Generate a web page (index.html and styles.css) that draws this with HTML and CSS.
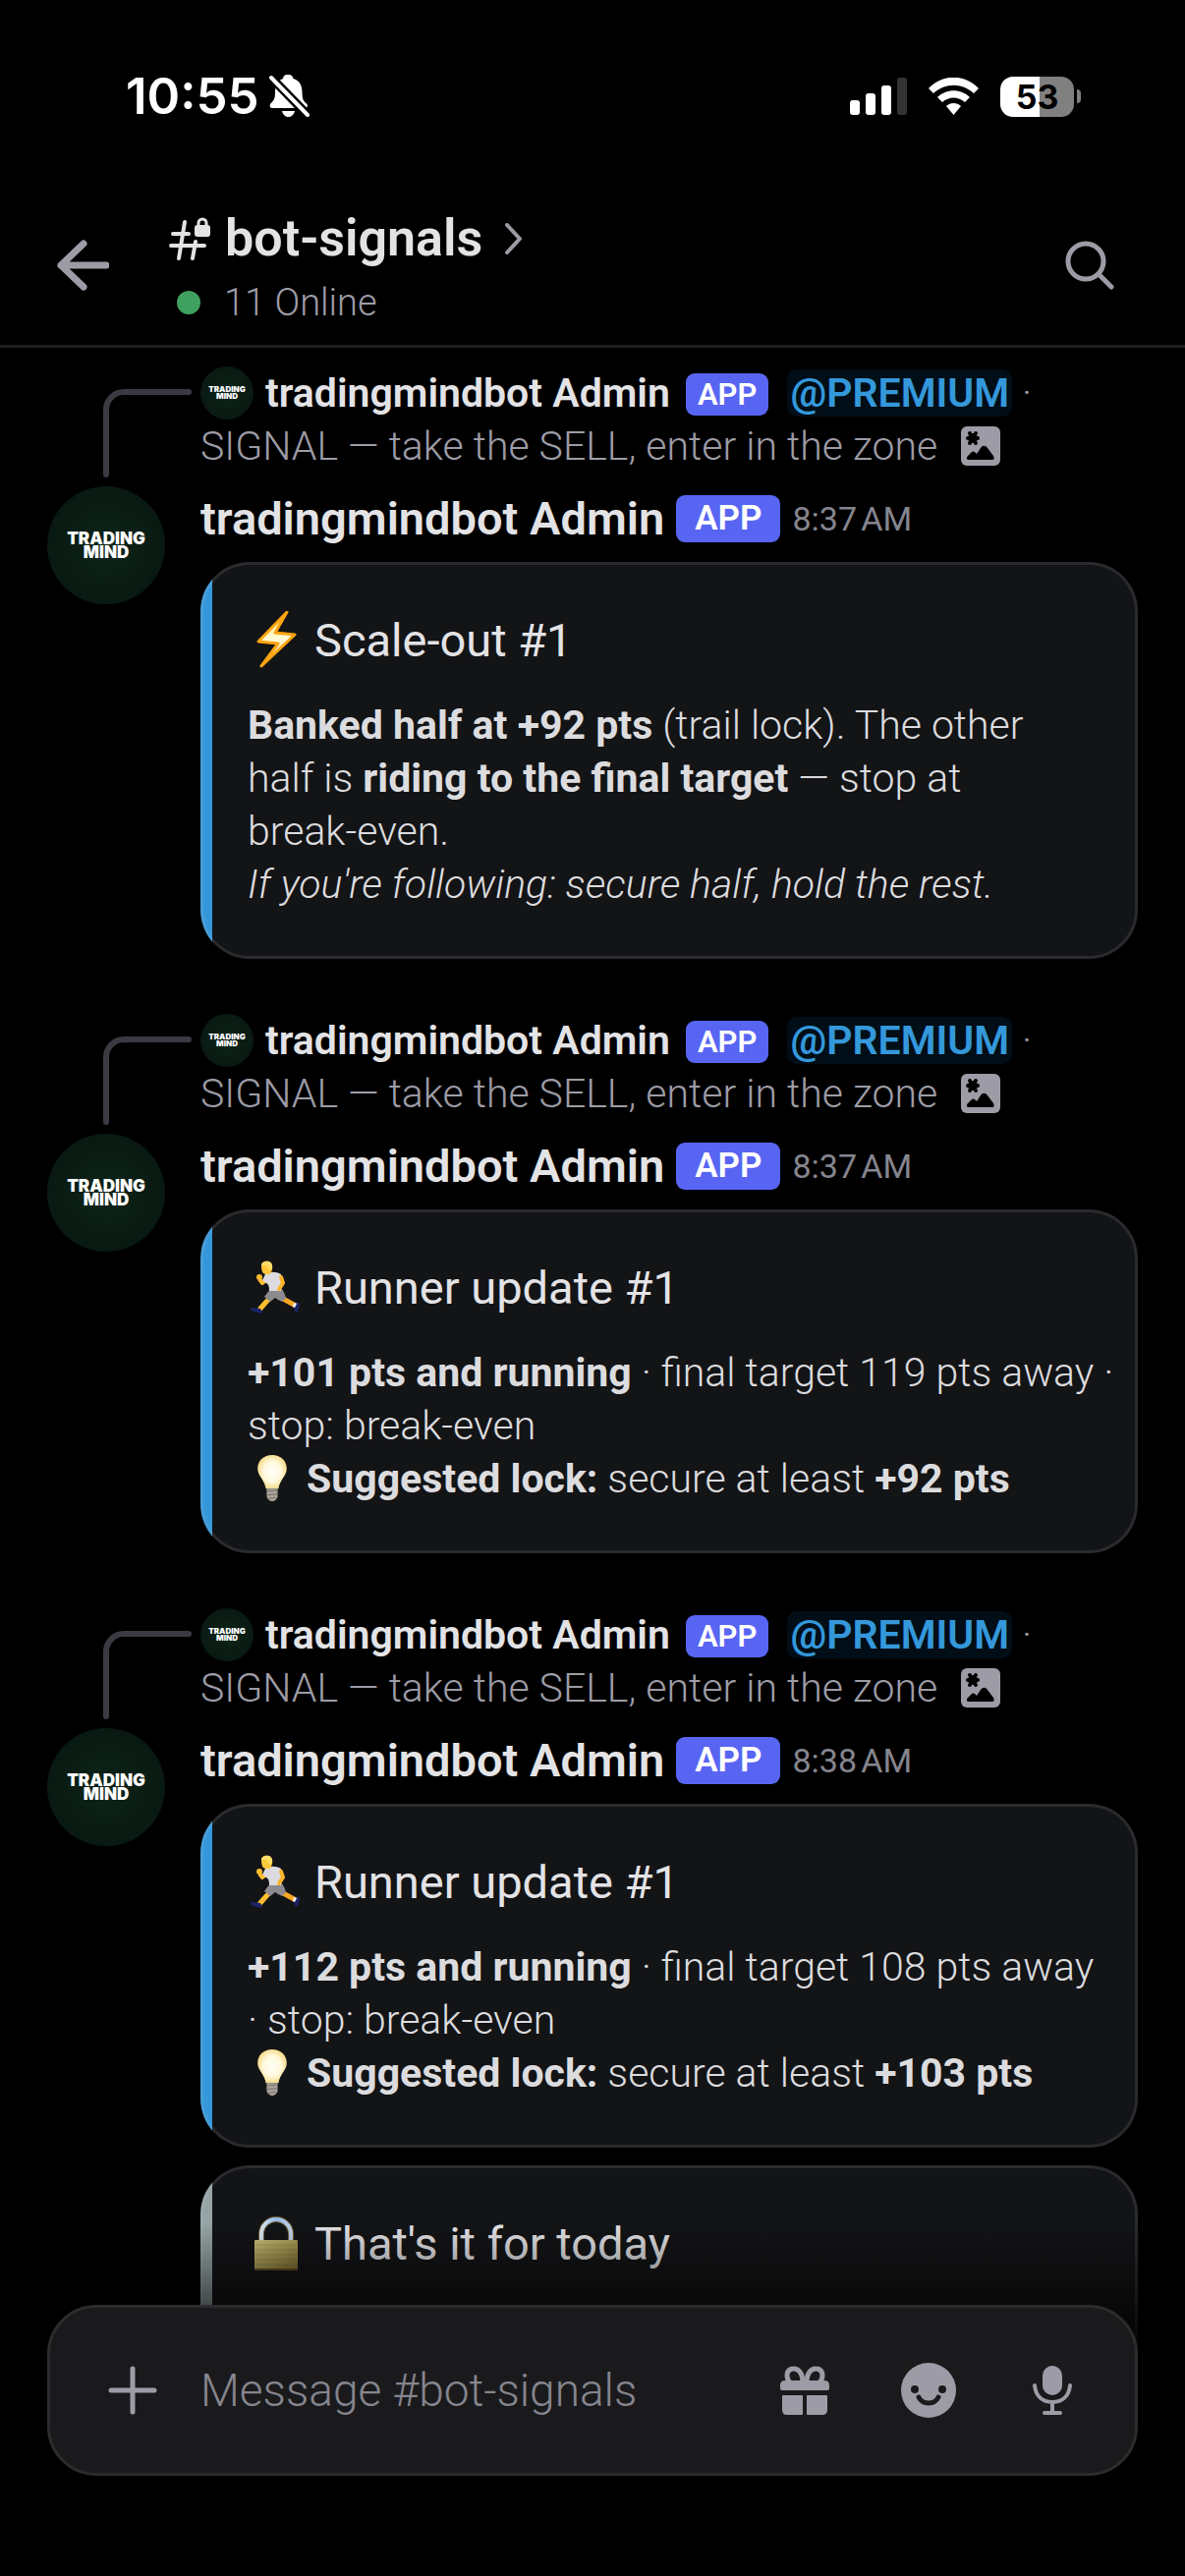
FILE: index.html
```html
<!DOCTYPE html>
<html lang="en">
<head>
    <meta charset="UTF-8">
    <meta name="viewport" content="width=device-width, initial-scale=1.0">
    <title>#bot-signals</title>
    <link rel="stylesheet" href="styles.css">
</head>
<body>
    <!-- Shared icons -->
    <svg class="sprite" aria-hidden="true">
        <defs>
            <linearGradient id="bolt-fill" x1="0" y1="0" x2="0" y2="1">
                <stop offset="0" stop-color="#ffe36b"/>
                <stop offset="0.5" stop-color="#fffbd8"/>
                <stop offset="1" stop-color="#ffd84a"/>
            </linearGradient>
            <radialGradient id="bulb-fill">
                <stop offset="0" stop-color="#fffffa"/>
                <stop offset="0.6" stop-color="#fff9dd"/>
                <stop offset="1" stop-color="#f5dd90"/>
            </radialGradient>
            <linearGradient id="lock-fill" x1="0" y1="0" x2="1" y2="1">
                <stop offset="0" stop-color="#d2c77d"/>
                <stop offset="0.5" stop-color="#aa9d56"/>
                <stop offset="1" stop-color="#7d6b32"/>
            </linearGradient>
            <linearGradient id="shackle-fill" x1="0" y1="0" x2="1" y2="0">
                <stop offset="0" stop-color="#dfe9f5"/>
                <stop offset="0.5" stop-color="#8fb8ea"/>
                <stop offset="1" stop-color="#c3d3e8"/>
            </linearGradient>
        </defs>
        <symbol id="reply-line" viewBox="0 0 93 90">
            <path d="M3 87V21A18 18 0 0 1 21 3H87" fill="none" stroke="#3a3a42" stroke-width="6" stroke-linecap="round"/>
        </symbol>
        <symbol id="image" viewBox="0 0 40 40">
            <rect width="40" height="40" rx="6" fill="#9d9ca6"/>
            <g fill="#000">
                <circle cx="12" cy="12" r="5"/>
                <circle cx="7" cy="12" r="2"/><circle cx="17" cy="12" r="2"/>
                <circle cx="9" cy="7" r="2"/><circle cx="15" cy="7" r="2"/>
                <circle cx="9" cy="17" r="2"/><circle cx="15" cy="17" r="2"/>
                <path d="M8 34c-2 0-3-2-1-4l3-3c2-2 3-2 5 0l1 1 4-6c2-3 5-3 7 0l6 8c1 2 1 4-1 4z"/>
            </g>
        </symbol>
        <symbol id="runner" viewBox="0 0 56 60">
            <path d="M31 39l7 3 11 6" fill="none" stroke="#f5a623" stroke-width="5" stroke-linejoin="round"/>
            <path d="M25 38l-6 6-7 8" fill="none" stroke="#ffbe2e" stroke-width="5" stroke-linejoin="round"/>
            <path d="M51 44l2 2-2 8c-1 1-3 1-3-1l-1-4z" fill="#1b2566"/>
            <path d="M4 50l9 1 2 3c-1 2-3 2-5 1l-6-2c-1-1-1-2 0-3z" fill="#1b2566"/>
            <path d="M47 45l3 1-2 4-2-1z" fill="#f2f2f2"/>
            <path d="M23 31l11-1c3 3 4 7 5 10l-4 4-7-4-5 4-6-5z" fill="#8b8b90"/>
            <path d="M19 22l-4 3-3-4" fill="none" stroke="#ffbe2e" stroke-width="4" stroke-linejoin="round"/>
            <circle cx="12" cy="19" r="3" fill="#ffbe2e"/>
            <path d="M18 16c4-3 11-3 16 0l1 7-1 10H22c0-5-1-7-3-8l-4-3z" fill="#dcdce0"/>
            <path d="M34 19l2 6-4 6" fill="none" stroke="#fdb32a" stroke-width="4" stroke-linejoin="round" stroke-linecap="round"/>
            <path d="M14 7c0-5 10-6 11 0 1 4-1 6-2 9h-4c-3 0-5-2-5-9z" fill="#ffc83a"/>
            <path d="M14 7c0-5 12-7 11 2l-2 3c-2-1-3-4-3-5z" fill="#f7dc6a"/>
        </symbol>
        <symbol id="bulb" viewBox="0 0 54 54">
            <path d="M27 1c9 0 16 6 16 15 0 8-8 13-9 22H20c-1-9-9-14-9-22C11 7 18 1 27 1z" fill="url(#bulb-fill)"/>
            <path d="M21 38h12v8c0 3-3 6-6 6s-6-3-6-6z" fill="#a9a49a"/>
            <path d="M21 41l12-1M21 45l12-1M23 49l8-1" stroke="#6f6b65" stroke-width="1"/>
        </symbol>
    </svg>

    <!-- Phone status bar -->
    <div class="status-bar">
        <div class="status-left">
            <span>10:55</span>
            <svg width="42" height="46" viewBox="0 0 42 46">
                <path d="M20 1c4 0 5 2 5.500 4 7 2 9 8 9 14 0 6 1 9 5 12 1 2 0 4-2 4H4c-2 0-3-2-2-4 4-4 5-6 5-12 0-7 2-12 8-14 .5-2 1-4 5-4zM14 38h13c-1 4-4 6-6.500 6s-5.500-2-6.500-6z" fill="#fff"/>
                <path d="M3 4l37 38" stroke="#000" stroke-width="9"/>
                <path d="M3 4l37 38" stroke="#fff" stroke-width="4" stroke-linecap="round"/>
            </svg>
        </div>
        <div class="status-right">
            <svg width="58" height="38" viewBox="0 0 58 38" fill="#fff">
                <rect y="23" width="10" height="15" rx="3"/>
                <rect x="16" y="16" width="10" height="22" rx="3"/>
                <rect x="32" y="8" width="10" height="30" rx="3"/>
                <rect x="48" width="10" height="38" rx="3" fill="#333"/>
            </svg>
            <svg width="51" height="38" viewBox="0 0 51 38" fill="#fff">
                <path d="M0 11C14-4 37-4 51 11l-5 5C34 5 17 5 5 16z"/>
                <path d="M9 20c9-9 24-9 33 0l-5 5c-7-6-16-6-23 0z"/>
                <path d="M18 29c4-4 11-4 15 0l-7.500 9z"/>
            </svg>
            <div class="battery"><span class="battery-level">53</span><span class="battery-tip"></span></div>
        </div>
    </div>

    <!-- Channel header -->
    <header class="channel-header">
        <button class="header-button" aria-label="Back">
            <svg width="54" height="54" viewBox="0 0 54 54"><path d="M51 27H5M28 5L5 27l23 22" fill="none" stroke="#9d9ca6" stroke-width="7" stroke-linecap="round" stroke-linejoin="round"/></svg>
        </button>
        <div class="channel-info">
            <h1 class="channel-name">
                <svg width="44" height="46" viewBox="0 0 44 46" fill="none" stroke="#e3e3e6" stroke-width="4" stroke-linecap="round">
                    <path d="M5 18H21M3 30H37M17 6L11 43M28 26L25 43"/>
                    <rect x="27" y="9" width="16" height="12" rx="3" fill="#e3e3e6" stroke="none"/>
                    <path d="M31 10V7a4 4 0 0 1 8 0v3" stroke-width="3"/>
                </svg>
                <span>bot-signals</span>
                <svg class="chevron" width="20" height="32" viewBox="0 0 20 32"><path d="M3 2l13 14L3 30" fill="none" stroke="#9d9ca6" stroke-width="4" stroke-linecap="round" stroke-linejoin="round"/></svg>
            </h1>
            <p class="channel-online"><span class="online-dot"></span>11 Online</p>
        </div>
        <button class="header-button" aria-label="Search">
            <svg width="50" height="50" viewBox="0 0 50 50" fill="none" stroke="#9d9ca6" stroke-width="5" stroke-linecap="round"><circle cx="21" cy="21" r="18"/><path d="M34 34l13 13"/></svg>
        </button>
    </header>

    <!-- Messages -->
    <main class="chat">
        <article class="message">
            <svg class="reply-line"><use href="#reply-line"/></svg>
            <p class="reply">
                <span class="avatar avatar-small">TRADING<br>MIND</span>
                <b class="reply-author">tradingmindbot Admin</b>
                <span class="badge badge-small">APP</span>
                <a class="mention" href="#premium">@PREMIUM</a> · SIGNAL — take the SELL, enter in the zone <svg class="reply-image"><use href="#image"/></svg>
            </p>
            <span class="avatar">TRADING<br>MIND</span>
            <div class="content">
                <div class="author-row">
                    <b class="author">tradingmindbot Admin</b>
                    <span class="badge">APP</span>
                    <time>8:37&#8239;AM</time>
                </div>
                <section class="card">
                    <h2>
                        <svg class="emoji" viewBox="0 0 56 60"><path d="M40 1L11 31l20 2-17 23 34-32-20-2z" fill="url(#bolt-fill)" stroke="#ffa412" stroke-width="3" stroke-linejoin="round"/></svg>
                        Scale-out #1
                    </h2>
                    <p><strong>Banked half at +92 pts</strong> (trail lock). The other<br>half is <strong>riding to the final target</strong> — stop at <span class="nowrap">break-even.</span></p>
                    <p><em>If you're following: secure half, hold the rest.</em></p>
                </section>
            </div>
        </article>

        <article class="message">
            <svg class="reply-line"><use href="#reply-line"/></svg>
            <p class="reply">
                <span class="avatar avatar-small">TRADING<br>MIND</span>
                <b class="reply-author">tradingmindbot Admin</b>
                <span class="badge badge-small">APP</span>
                <a class="mention" href="#premium">@PREMIUM</a> · SIGNAL — take the SELL, enter in the zone <svg class="reply-image"><use href="#image"/></svg>
            </p>
            <span class="avatar">TRADING<br>MIND</span>
            <div class="content">
                <div class="author-row">
                    <b class="author">tradingmindbot Admin</b>
                    <span class="badge">APP</span>
                    <time>8:37&#8239;AM</time>
                </div>
                <section class="card">
                    <h2><svg class="emoji"><use href="#runner"/></svg>Runner update #1</h2>
                    <p><strong>+101 pts and running</strong> · final target 119 pts away ·<br>stop: break-even</p>
                    <p><svg class="bulb"><use href="#bulb"/></svg> <strong>Suggested lock:</strong> secure at least <strong>+92 pts</strong></p>
                </section>
            </div>
        </article>

        <article class="message">
            <svg class="reply-line"><use href="#reply-line"/></svg>
            <p class="reply">
                <span class="avatar avatar-small">TRADING<br>MIND</span>
                <b class="reply-author">tradingmindbot Admin</b>
                <span class="badge badge-small">APP</span>
                <a class="mention" href="#premium">@PREMIUM</a> · SIGNAL — take the SELL, enter in the zone <svg class="reply-image"><use href="#image"/></svg>
            </p>
            <span class="avatar">TRADING<br>MIND</span>
            <div class="content">
                <div class="author-row">
                    <b class="author">tradingmindbot Admin</b>
                    <span class="badge">APP</span>
                    <time>8:38&#8239;AM</time>
                </div>
                <section class="card">
                    <h2><svg class="emoji"><use href="#runner"/></svg>Runner update #1</h2>
                    <p><strong>+112 pts and running</strong> · final target 108 pts away<br>· stop: break-even</p>
                    <p><svg class="bulb"><use href="#bulb"/></svg> <strong>Suggested lock:</strong> secure at least <strong>+103 pts</strong></p>
                </section>
                <section class="card card-gray">
                    <h2>
                        <svg class="emoji" viewBox="0 0 56 60">
                            <path d="M14 30V20a15 15 0 0 1 30 0v10" fill="none" stroke="#6d6238" stroke-width="6"/>
                            <path d="M14 30V20a15 15 0 0 1 30 0v10" fill="none" stroke="url(#shackle-fill)" stroke-width="4"/>
                            <rect x="7" y="26" width="44" height="31" rx="1" fill="url(#lock-fill)"/>
                            <path d="M8 31h42M8 36h42M8 41h42M8 46h42M8 51h42" stroke="#6f6230" stroke-opacity="0.25"/>
                            <path d="M7 55h44v2H7z" fill="#5f4f20"/>
                        </svg>
                        That's it for today
                    </h2>
                </section>
            </div>
        </article>
    </main>

    <!-- Message box -->
    <footer class="composer-area">
        <form class="composer">
            <button type="button" aria-label="Add attachment">
                <svg width="50" height="50" viewBox="0 0 50 50"><path d="M25 3V47M3 25H47" stroke="#9d9ca6" stroke-width="5" stroke-linecap="round"/></svg>
            </button>
            <input type="text" placeholder="Message #bot-signals" aria-label="Message #bot-signals">
            <div class="composer-actions">
                <button type="button" aria-label="Send a gift">
                    <svg width="50" height="50" viewBox="0 0 50 50" fill="#9d9ca6">
                        <path d="M23 17C23 8 19 3 14 3 9 3 7 6 7 10c0 3 1 5 3 7M27 17c0-9 4-14 9-14 5 0 7 3 7 7 0 3-1 5-3 7" fill="none" stroke="#9d9ca6" stroke-width="5"/>
                        <path d="M5 15h40q5 0 5 5v3q0 2-2 2H2q-2 0-2-2v-3q0-5 5-5zM3 30h19q1 0 1 1v18q0 1-1 1H7q-5 0-5-5V31q0-1 1-1zM28 30h19q1 0 1 1v14q0 5-5 5H28q-1 0-1-1V31q0-1 1-1z"/>
                    </svg>
                </button>
                <button type="button" aria-label="Emoji">
                    <svg width="56" height="56" viewBox="0 0 56 56">
                        <circle cx="28" cy="28" r="28" fill="#9d9ca6"/>
                        <circle cx="14" cy="27" r="4" fill="#1a1a1c"/>
                        <circle cx="42" cy="27" r="4" fill="#1a1a1c"/>
                        <path d="M18 35c4 8 16 8 20 0" fill="none" stroke="#1a1a1c" stroke-width="5" stroke-linecap="round"/>
                    </svg>
                </button>
                <button type="button" aria-label="Voice message">
                    <svg width="40" height="50" viewBox="0 0 40 50">
                        <rect x="10" width="20" height="30" rx="10" fill="#9d9ca6"/>
                        <path d="M2 20c1 11 8 17 18 17s17-6 18-17M20 37v10M12 48h16" fill="none" stroke="#9d9ca6" stroke-width="4" stroke-linecap="round"/>
                    </svg>
                </button>
            </div>
        </form>
    </footer>
</body>
</html>
```
FILE: styles.css
```css
* {
    box-sizing: border-box;
}

body {
    margin: 0;
    height: 100vh;
    display: flex;
    flex-direction: column;
    position: relative;
    overflow: hidden;
    background: #000;
    color: #e3e3e6;
    font-family: Roboto, "Noto Sans", sans-serif;
    font-size: 41px;
    line-height: 54px;
    font-weight: 300;
}

h1, h2, p {
    margin: 0;
}

svg {
    flex: none;
}

button {
    display: flex;
    align-items: center;
    justify-content: center;
    padding: 0;
    border: none;
    background: none;
    cursor: pointer;
}

.sprite {
    position: absolute;
    width: 0;
    height: 0;
}

/* Status bar */
.status-bar {
    display: flex;
    justify-content: space-between;
    align-items: center;
    height: 196px;
    padding: 0 106px 0 128px;
    color: #fff;
    font-family: Inter, sans-serif;
    font-size: 51px;
    font-weight: 600;
    flex: none;
}

.status-left {
    display: flex;
    align-items: center;
    gap: 9px;
}

.status-right {
    display: flex;
    align-items: center;
    gap: 22px;
}

.battery {
    display: flex;
    align-items: center;
    gap: 3px;
}

.battery-level {
    width: 75px;
    height: 41px;
    border-radius: 13px;
    background: linear-gradient(to right, #fff 53%, #808080 53%);
    color: #000;
    font-size: 34px;
    font-weight: 700;
    line-height: 41px;
    text-align: center;
}

.battery-tip {
    width: 4px;
    height: 14px;
    border-radius: 0 4px 4px 0;
    background: #808080;
}

/* Channel header */
.channel-header {
    display: flex;
    gap: 60px;
    padding: 16px 72px 17px 57px;
    border-bottom: 3px solid #1f1f21;
    flex: none;
}

.header-button {
    height: 116px;
}

.channel-info {
    flex: 1;
}

.channel-name {
    display: flex;
    align-items: center;
    gap: 14px;
    font-size: 52px;
    line-height: 62px;
    font-weight: 600;
}

.chevron {
    margin-left: 8px;
}

.channel-online {
    display: flex;
    align-items: center;
    gap: 24px;
    margin-top: 8px;
    padding-left: 9px;
    color: #9d9ca6;
    font-size: 38px;
    line-height: 52px;
}

.online-dot {
    width: 24px;
    height: 24px;
    border-radius: 50%;
    background: #40a05f;
}

/* Messages */
.chat {
    display: flex;
    flex-direction: column;
    gap: 56px;
    padding: 19px 48px 0;
    flex: 1;
    min-height: 0;
    overflow: hidden;
}

.message {
    display: grid;
    grid-template-columns: 120px minmax(0, 1fr);
    gap: 14px 36px;
    flex: none;
}

/* The line runs on into the gap above the avatar */
.reply-line {
    width: 93px;
    height: 90px;
    margin: 23px 0 -8px 57px;
}

.reply {
    color: #9d9ca6;
}

.reply-author {
    margin: 0 6px 0 2px;
    color: #e3e3e6;
    font-weight: 600;
}

.reply-image {
    width: 40px;
    height: 40px;
    margin-left: 14px;
    vertical-align: -6px;
}

.avatar {
    display: flex;
    align-items: center;
    justify-content: center;
    width: 120px;
    height: 120px;
    border-radius: 50%;
    background: radial-gradient(#0d2418, #07150f);
    color: #fff;
    font-family: Inter, sans-serif;
    font-size: 17px;
    line-height: 14px;
    font-weight: 900;
    text-align: center;
}

.avatar-small {
    display: inline-flex;
    width: 54px;
    height: 54px;
    font-size: 8px;
    line-height: 7px;
    vertical-align: top;
}

.content {
    min-width: 0;
    padding-top: 3px;
}

.author-row {
    display: flex;
    align-items: center;
    height: 60px;
    margin-bottom: 14px;
    line-height: 60px;
}

.author {
    font-size: 47px;
    font-weight: 600;
}

.author-row time {
    color: #85858e;
    font-size: 34px;
    font-weight: 400;
}

.badge {
    margin: 0 12px;
    padding: 0 19px;
    border-radius: 9px;
    background: #5865f2;
    color: #fff;
    font-size: 35px;
    line-height: 48px;
    font-weight: 600;
}

.badge-small {
    display: inline-block;
    margin: 0 9px 0 0;
    padding: 0 12px;
    font-size: 31px;
    line-height: 43px;
    vertical-align: 2px;
}

.mention {
    padding: 0 3px;
    border-radius: 10px;
    background: #020e17;
    color: #3498db;
    font-weight: 600;
    text-decoration: none;
}

/* Embed cards */
.card {
    padding: 47px 9px 46px 45px;
    border: 3px solid rgba(200, 200, 212, 0.13);
    border-radius: 50px;
    background: linear-gradient(to right, #3498db 12px, #131416 12px) border-box;
    color: #dcdcdf;
}

.card h2 {
    display: flex;
    align-items: center;
    gap: 12px;
    margin-bottom: 29px;
    color: #e3e3e6;
    font-size: 47px;
    line-height: 60px;
    font-weight: 400;
}

.card strong {
    font-weight: 700;
}

.nowrap {
    white-space: nowrap;
}

.card-gray {
    min-height: 350px;
    margin-top: 18px;
    background: linear-gradient(to right, #95a5a6 12px, #131416 12px) border-box;
}

.emoji {
    width: 56px;
    height: 60px;
}

.bulb {
    width: 50px;
    height: 54px;
    vertical-align: top;
}

/* Message box, laid over the end of the chat */
.composer-area {
    position: absolute;
    left: 0;
    right: 0;
    bottom: 0;
    padding: 84px 48px 102px;
    background: linear-gradient(transparent, #000 150px);
}

.composer {
    display: flex;
    align-items: center;
    gap: 33px;
    height: 174px;
    padding: 0 48px;
    border: 3px solid #2c2c2e;
    border-radius: 50px;
    background: #1a1a1c;
}

.composer button {
    width: 72px;
    height: 72px;
    flex: none;
}

.composer input {
    flex: 1;
    min-width: 0;
    padding: 0;
    border: none;
    outline: none;
    background: none;
    color: #e3e3e6;
    font: inherit;
    font-size: 46px;
}

.composer input::placeholder {
    color: #85858e;
    opacity: 1;
}

.composer-actions {
    display: flex;
    gap: 54px;
}
```
